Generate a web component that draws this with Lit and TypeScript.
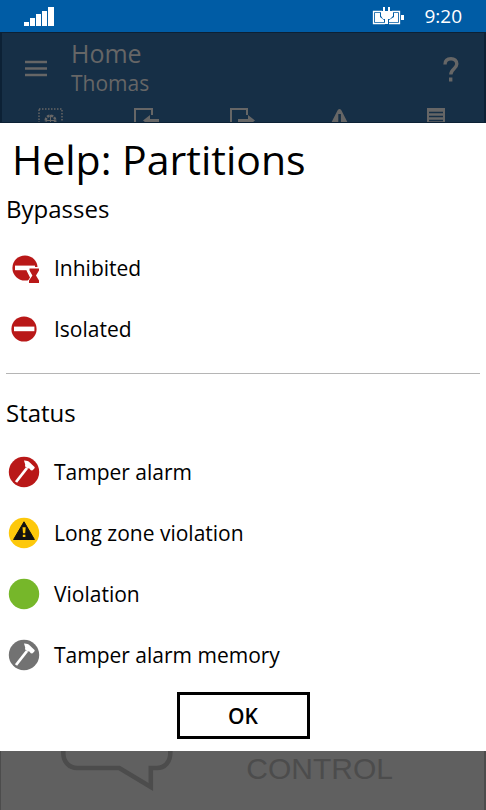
import { LitElement, html, css, svg } from "lit";
import { customElement } from "lit/decorators.js";

const hammer = (fill: string) => svg`
  <circle cx="16" cy="16" r="15.2" fill=${fill}></circle>
  <path d="M8 26 19 12" stroke="#fff" stroke-width="2.8" fill="none"></path>
  <path d="M16 4.600c2.200-.2 4.400.6 5.800 1.800l5 4.800-.6 1.600-2 1.800-1.400-.4-1.400-1.600-2.200-.4-2.200-2 .2-1.800z" fill="#fff"></path>`;

const icons: Record<string, unknown> = {
  inhibited: svg`
    <circle cx="17" cy="16" r="12.600" fill="#b91818"></circle>
    <rect x="7" y="13.600" width="20" height="4.600" fill="#fff"></rect>
    <path d="M20 15h14v17H19.500v-2.500l2.500-4-3.500-7z" fill="#fff"></path>
    <path d="M21.500 16.500h9.500v2l-3 5 3 5v2.500h-10v-2.500l3.400-5-2.900-5z" fill="#b91818"></path>`,
  isolated: svg`
    <circle cx="16" cy="16" r="12.600" fill="#b91818"></circle>
    <rect x="6" y="13.600" width="20.400" height="4.600" fill="#fff"></rect>`,
  tamper: hammer("#b91818"),
  longzone: svg`
    <circle cx="16" cy="16" r="15.200" fill="#fdc80b"></circle>
    <path d="M16 4.800 26.400 22.500H5.600z" fill="#111" stroke="#111" stroke-linejoin="round"></path>
    <path d="M14.500 10.300h3.200l-.5 6h-2.200zM14.800 17.800h2.600v2.200h-2.600z" fill="#fdc80b"></path>`,
  violation: svg`<circle cx="16" cy="16" r="15.200" fill="#76b72a"></circle>`,
  memory: hammer("#727272"),
};

const sections = [
  { title: "Bypasses", rows: [["inhibited", "Inhibited"], ["isolated", "Isolated"]] },
  {
    title: "Status",
    rows: [
      ["tamper", "Tamper alarm"],
      ["longzone", "Long zone violation"],
      ["violation", "Violation"],
      ["memory", "Tamper alarm memory"],
    ],
  },
];

const tabs = [
  {
    label: "Partitions",
    art: svg`<rect x="1" y="1" width="23" height="23" fill="none" stroke="currentColor" stroke-width="1.500" stroke-dasharray="1.500 1.500"></rect>
      <circle cx="12.500" cy="12.500" r="4.800" fill="none" stroke="currentColor" stroke-width="2.500" stroke-dasharray="2.600 1.100"></circle>
      <path d="M12.500 7v11M7.500 12.500h10" stroke="currentColor"></path>`,
  },
  {
    label: "Inputs",
    art: svg`<path d="M18 7V1H1v24" fill="none" stroke="currentColor" stroke-width="2"></path>
      <path d="M9 12.500l7-5.500v4h9v3h-9v4z" fill="currentColor"></path>`,
  },
  {
    label: "Outputs",
    art: svg`<path d="M17 7V1H1v24" fill="none" stroke="currentColor" stroke-width="2"></path>
      <path d="M25 12.500l-7-5.500v4H8v3h10v4z" fill="currentColor"></path>`,
  },
  {
    label: "Troubles",
    art: svg`<path d="M12.500 1c1 0 1.600.8 2 1.600L25 23H0L10.500 2.600c.4-.8 1-1.600 2-1.600z" fill="currentColor"></path>
      <path d="M11.300 6h2.600v11h-2.600z" fill="#162f46"></path>`,
  },
  {
    label: "Events",
    art: svg`<path d="M4 0h18v25H4z" fill="currentColor"></path>
      <path d="M6 4.500h14M6 8.500h14M6 12.500h14M6 16.500h14" stroke="#162f46" stroke-width="1.500"></path>`,
  },
];

@customElement("app-root")
export class AppRoot extends LitElement {
  static styles = css`
    :host {
      display: flex;
      flex-direction: column;
      min-height: 100vh;
      background: #fff;
      color: #000;
      font-family: "Open Sans", "Noto Sans", sans-serif;
    }
    * { box-sizing: border-box; }
    svg { display: block; flex: none; }
    h1, h2, p, ul { margin: 0; padding: 0; font-weight: 400; }
    button { font: inherit; color: inherit; background: none; border: 0; padding: 0; }
    .status {
      display: flex;
      align-items: center;
      height: 32px;
      padding: 0 24px;
      background: #005ca5;
      color: #fff;
    }
    .battery { margin-left: auto; }
    .clock { margin-left: 19px; font-size: 19px; line-height: 32px; }
    .header {
      height: 91px;
      overflow: hidden;
      background: #162f46;
      border: solid #0c2135;
      border-width: 1px 2px;
      color: #666;
    }
    .bar { display: flex; align-items: center; height: 72px; padding: 0 24px 0 22px; }
    .names { flex: 1; margin-left: 23px; padding-bottom: 4px; }
    .place { font-size: 25px; line-height: 32px; }
    .user { font-size: 21px; line-height: 28px; }
    .tabs { display: flex; justify-content: space-around; padding-top: 3px; }
    .dialog { display: flex; flex-direction: column; flex: 1; padding: 8px 6px 12px; }
    .title { padding-left: 6px; font-size: 41px; line-height: 56px; }
    .heading { font-size: 24px; line-height: 44px; }
    .list { list-style: none; padding: 6px 0 14px; }
    .row { display: flex; align-items: center; gap: 12px; height: 61px; padding-left: 2px; font-size: 21px; }
    .section + .section { border-top: 1px solid #b5b5b5; padding-top: 17px; }
    .section:last-of-type .list { padding-bottom: 7px; }
    .ok {
      align-self: center;
      width: 133px;
      height: 47px;
      margin-top: auto;
      border: 3px solid #000;
      font-size: 21px;
      font-weight: 600;
    }
    .footer {
      display: flex;
      justify-content: space-between;
      height: 59px;
      overflow: hidden;
      padding: 0 91px 0 60px;
      background: #606060;
      border-left: 1px solid #4c4c4c;
      border-right: 2px solid #4c4c4c;
      color: #4c4c4c;
    }
    .brand { font-family: "Liberation Sans", sans-serif; font-size: 30px; line-height: 36px; }
  `;

  render() {
    return html`
      <div class="status">
        <svg width="30" height="20" viewBox="0 0 30 20" fill="#fff" role="img" aria-label="Signal">
          <path d="M0 16h5v4H0zM6 12h5v8H6zM12 8h5v12h-5zM18 5h5v15h-5zM24 1h6v19h-6z"></path>
        </svg>
        <svg class="battery" width="33" height="20" viewBox="0 0 33 20" role="img" aria-label="Charging">
          <path d="M10 5.500H1.500v12H13M20 5.500h7.500v12H17" fill="none" stroke="#fff" stroke-width="1.300"></path>
          <path d="M3 7h5v4l4 3v2H3zM22 7h4v9h-9v-2l5-3zM29 9h3v5h-3z" fill="#fff"></path>
          <path d="M11 1h2v4h3V1h2v4h3v5l-3 3h-2v5h-3v-5h-2l-2-3V5h2z" fill="#fff"></path>
        </svg>
        <span class="clock">9:20</span>
      </div>
      <header class="header">
        <div class="bar">
          <button aria-label="Menu">
            <svg width="24" height="20" viewBox="0 0 24 20" stroke="currentColor" stroke-width="2.600">
              <path d="M1 3h22M1 9.500h22M1 16h22"></path>
            </svg>
          </button>
          <div class="names">
            <p class="place">Home</p>
            <p class="user">Thomas</p>
          </div>
          <button aria-label="Help">
            <svg width="18" height="26" viewBox="0 0 18 26" fill="none" stroke="currentColor" stroke-width="3.400">
              <path d="M3 8.500C3 4.500 5.500 2.700 9 2.700s5.800 2 5.800 5.300c0 4.500-6 5-6 10.500"></path>
              <path d="M8.700 21.500v4"></path>
            </svg>
          </button>
        </div>
        <nav class="tabs">
          ${tabs.map((t) => html`<button aria-label=${t.label}><svg width="25" height="25" viewBox="0 0 25 25">${t.art}</svg></button>`)}
        </nav>
      </header>
      <main class="dialog" role="dialog" aria-labelledby="title">
        <h1 class="title" id="title">Help: Partitions</h1>
        ${sections.map(
          (s) => html`<section class="section">
            <h2 class="heading">${s.title}</h2>
            <ul class="list">
              ${s.rows.map(
                ([icon, label]) => html`<li class="row">
                  <svg width="34" height="32" viewBox="0 0 34 32" aria-hidden="true">${icons[icon]}</svg>
                  <span>${label}</span>
                </li>`
              )}
            </ul>
          </section>`
        )}
        <button class="ok">OK</button>
      </main>
      <footer class="footer">
        <svg width="112" height="42" viewBox="0 0 112 42" fill="none" stroke="currentColor" stroke-width="4.500" aria-hidden="true">
          <path d="M2.300 0v2c0 9 6 15 14 15h42l31.500 19V17h6c8 0 13.500-6 13.500-15V0"></path>
        </svg>
        <span class="brand">CONTROL</span>
      </footer>
    `;
  }
}
